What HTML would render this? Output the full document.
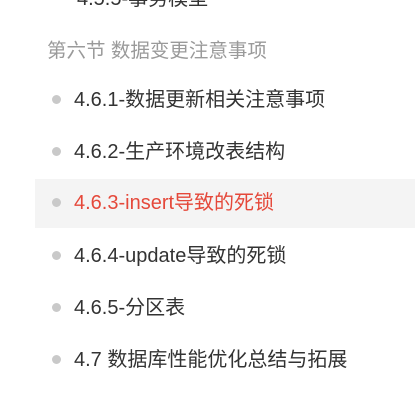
<!DOCTYPE html>
<html><head><meta charset="utf-8"><style>
html,body{margin:0;padding:0;background:#fff;width:415px;height:405px;overflow:hidden;font-family:"Liberation Sans","Noto Sans CJK SC",sans-serif;}
.t{position:absolute;white-space:nowrap;}
.top{left:77px;top:-18px;font-size:20px;color:#333;}
.h{left:47px;top:34px;font-size:19.5px;color:#9a9a9a;}
.hl{position:absolute;left:35px;top:179px;width:380px;height:49px;background:#f4f4f4;}
.row{position:absolute;left:0;width:415px;height:26px;}
.row .b{position:absolute;left:52px;top:8px;width:9px;height:9px;border-radius:50%;background:#c9c9c9;}
.row .x{position:absolute;left:74px;top:0;font-size:20px;line-height:26px;color:#333;white-space:nowrap;}
.red .x{color:#e5483a;}
</style></head><body>
<div class="t top">4.5.5-事务模型</div>
<div class="t h">第六节 数据变更注意事项</div>
<div class="hl"></div>
<div class="row" style="top:87px"><div class="b"></div><div class="x">4.6.1-数据更新相关注意事项</div></div>
<div class="row" style="top:139px"><div class="b"></div><div class="x">4.6.2-生产环境改表结构</div></div>
<div class="row red" style="top:190px"><div class="b"></div><div class="x">4.6.3-insert导致的死锁</div></div>
<div class="row" style="top:243px"><div class="b"></div><div class="x">4.6.4-update导致的死锁</div></div>
<div class="row" style="top:295px"><div class="b"></div><div class="x">4.6.5-分区表</div></div>
<div class="row" style="top:347px"><div class="b"></div><div class="x">4.7 数据库性能优化总结与拓展</div></div>
</body></html>
